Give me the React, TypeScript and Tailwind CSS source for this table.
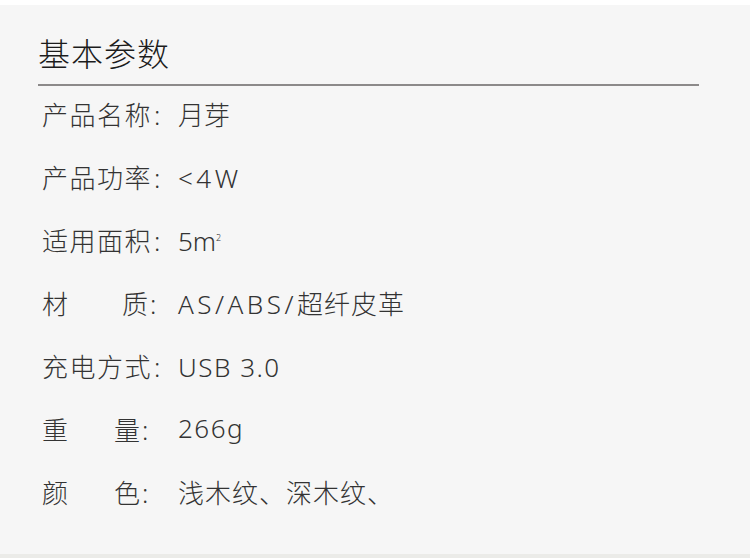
import React from "react";

const font = { fontFamily: '"Noto Sans", "Noto Sans CJK SC", sans-serif' };

type Row = { label: React.ReactNode; value: React.ReactNode };

const Spread = ({ a, b, w }: { a: string; b: string; w: string }) => (
  <span className={`flex justify-between ${w}`}>
    <span>{a}</span>
    <span>{b}</span>
  </span>
);

export default function App() {
  const rows: Row[] = [
    { label: <span className="tracking-[1.5px]">产品名称</span>, value: "月芽" },
    { label: <span className="tracking-[1.5px]">产品功率</span>, value: <span className="tracking-[3.5px]">&lt;4W</span> },
    { label: <span className="tracking-[1.5px]">适用面积</span>, value: <span>5m<sup className="text-[9px] -top-[10px]">2</sup></span> },
    {
      label: <Spread a="材" b="质" w="w-[106px]" />,
      value: (
        <span>
          <span className="tracking-[3.5px]">AS/ABS/</span>
          <span className="tracking-[1px]">超纤皮革</span>
        </span>
      ),
    },
    { label: <span className="tracking-[1.5px]">充电方式</span>, value: <span className="tracking-[1.5px]">USB 3.0</span> },
    { label: <Spread a="重" b="量" w="w-[98px]" />, value: <span className="tracking-[1.5px] relative -top-[2px]">266g</span> },
    { label: <Spread a="颜" b="色" w="w-[98px]" />, value: <span className="tracking-[1px]">浅木纹、深木纹、</span> },
  ];
  return (
    <div className="w-[750px] h-[558px] bg-white pt-[5px] flex flex-col font-light" style={font}>
      <div className="flex-1 bg-[#f6f6f6] pl-[38px] pt-[29px] flex flex-col">
        <div className="text-[32px] leading-[40px] text-[#1c1c1c] tracking-[1px]">基本参数</div>
        <div className="mt-[10px] h-[2px] w-[661px] bg-[#8c8a8a]" />
        <div className="mt-[9px] pl-[4px] flex flex-col gap-[23px] text-[26px] leading-[40px] text-[#333]">
          {rows.map((r, i) => (
            <div key={i} className="flex h-[40px] items-center">
              <div className="w-[136px] flex items-center">
                {r.label}
                <span className="ml-[2px]">:</span>
              </div>
              <div>{r.value}</div>
            </div>
          ))}
        </div>
      </div>
      <div className="h-[4px] bg-[#ebebe8]" />
    </div>
  );
}
